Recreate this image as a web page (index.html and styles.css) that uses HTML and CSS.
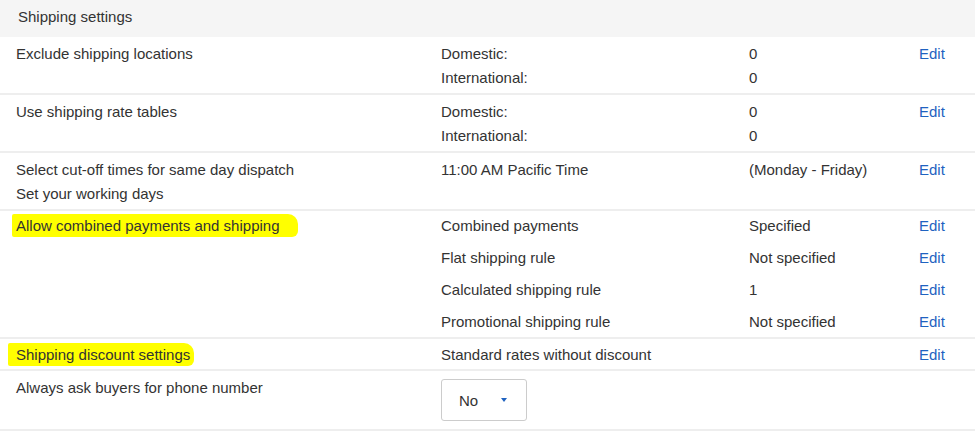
FILE: index.html
```html
<!DOCTYPE html>
<html lang="en">
<head>
    <meta charset="UTF-8">
    <title>Shipping settings</title>
    <link rel="stylesheet" href="styles.css">
</head>
<body>
    <!-- Section header -->
    <div class="section-head">Shipping settings</div>

    <!-- Settings rows -->
    <div class="row">
        <div class="col-label"><div class="line">Exclude shipping locations</div></div>
        <div class="col-name">
            <div class="line">Domestic:</div>
            <div class="line">International:</div>
        </div>
        <div class="col-value">
            <div class="line">0</div>
            <div class="line">0</div>
        </div>
        <div class="col-action"><div class="line"><a href="#">Edit</a></div></div>
    </div>

    <div class="row">
        <div class="col-label"><div class="line">Use shipping rate tables</div></div>
        <div class="col-name">
            <div class="line">Domestic:</div>
            <div class="line">International:</div>
        </div>
        <div class="col-value">
            <div class="line">0</div>
            <div class="line">0</div>
        </div>
        <div class="col-action"><div class="line"><a href="#">Edit</a></div></div>
    </div>

    <div class="row">
        <div class="col-label">
            <div class="line">Select cut-off times for same day dispatch</div>
            <div class="line">Set your working days</div>
        </div>
        <div class="col-name"><div class="line">11:00 AM Pacific Time</div></div>
        <div class="col-value"><div class="line">(Monday - Friday)</div></div>
        <div class="col-action"><div class="line"><a href="#">Edit</a></div></div>
    </div>

    <div class="row row-spaced">
        <div class="col-label"><div class="line"><span class="marker">Allow combined payments and shipping</span></div></div>
        <div class="col-name">
            <div class="line">Combined payments</div>
            <div class="line">Flat shipping rule</div>
            <div class="line">Calculated shipping rule</div>
            <div class="line">Promotional shipping rule</div>
        </div>
        <div class="col-value">
            <div class="line">Specified</div>
            <div class="line">Not specified</div>
            <div class="line">1</div>
            <div class="line">Not specified</div>
        </div>
        <div class="col-action">
            <div class="line"><a href="#">Edit</a></div>
            <div class="line"><a href="#">Edit</a></div>
            <div class="line"><a href="#">Edit</a></div>
            <div class="line"><a href="#">Edit</a></div>
        </div>
    </div>

    <div class="row row-single">
        <div class="col-label"><div class="line"><span class="marker marker-wide">Shipping discount settings</span></div></div>
        <div class="col-name"><div class="line">Standard rates without discount</div></div>
        <div class="col-value"></div>
        <div class="col-action"><div class="line"><a href="#">Edit</a></div></div>
    </div>

    <div class="row row-select">
        <div class="col-label"><div class="line">Always ask buyers for phone number</div></div>
        <div class="col-name">
            <div class="select-box">
                <span>No</span>
                <span class="caret"></span>
            </div>
        </div>
        <div class="col-value"></div>
        <div class="col-action"></div>
    </div>
</body>
</html>
```

FILE: styles.css
```css
/* General page settings */
body {
    margin: 0;
    font-family: "Liberation Sans", Arial, sans-serif;
    font-size: 15px;
    color: #333;
    background: #fff;
}

/* Grey section header */
.section-head {
    height: 37px;
    line-height: 33px;
    padding-left: 18px;
    background: #f5f5f5;
}

/* One settings row: four columns */
.row {
    display: grid;
    grid-template-columns: 441px 308px 170px 1fr;
    padding: 4px 0;
    border-bottom: 2px solid #eeeeee;
}

.col-label {
    padding-left: 16px;
}

.line {
    height: 23px;
    padding-top: 1px;
    line-height: 24px;
}

/* Rows with wider line spacing */
.row-spaced {
    padding-top: 2px;
}

.row-spaced .line + .line {
    margin-top: 8px;
}

.row-single {
    padding: 3px 0;
}

.row-select {
    padding: 4px 0 8px;
}

a {
    color: #1f62c0;
    text-decoration: none;
}

/* Yellow marker highlight */
.marker {
    background: #ffff00;
    padding: 3px 18px 3px 4px;
    margin-left: -4px;
    border-radius: 2px 10px 6px 2px;
}

.marker-wide {
    padding: 3px 4px 3px 8px;
    margin-left: -8px;
}

/* Dropdown */
.select-box {
    display: flex;
    align-items: center;
    width: 86px;
    height: 42px;
    margin-top: 4px;
    box-sizing: border-box;
    padding-left: 17px;
    border: 1px solid #cccccc;
    border-radius: 3px;
}

.caret {
    width: 0;
    height: 0;
    margin-left: 23px;
    border-left: 3.5px solid transparent;
    border-right: 3.5px solid transparent;
    border-top: 4px solid #1f62c0;
}
```
